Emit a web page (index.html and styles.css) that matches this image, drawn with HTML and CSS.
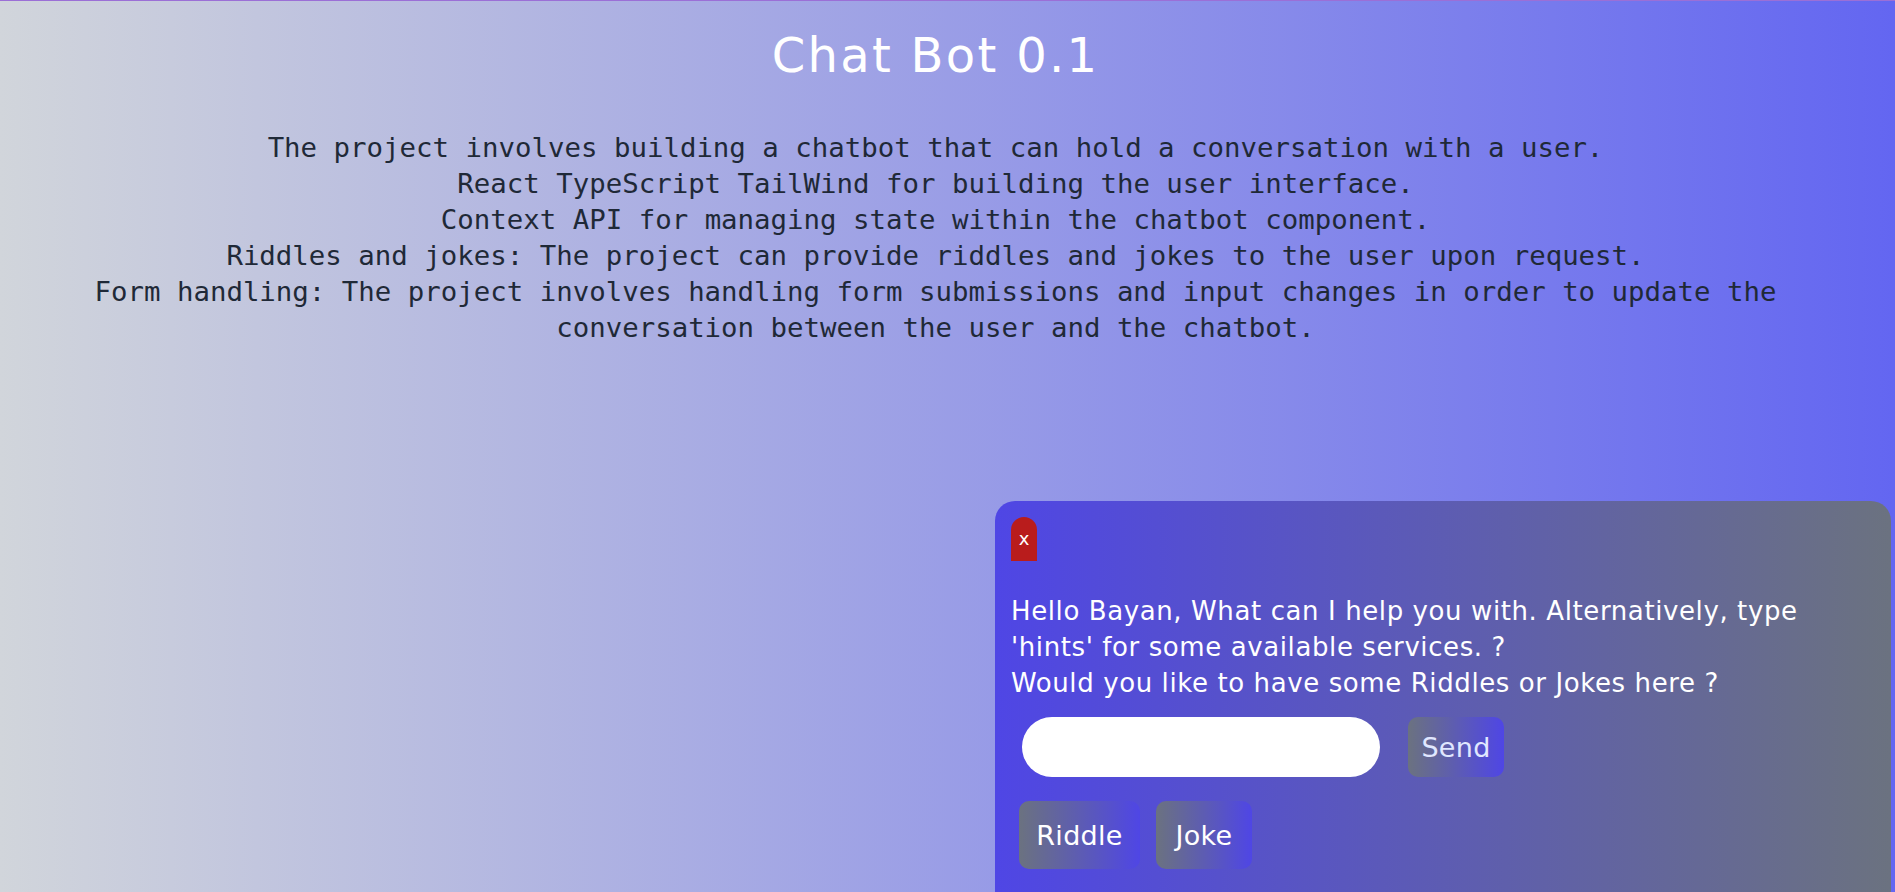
FILE: index.html
```html
<!DOCTYPE html>
<html lang="en">
<head>
<meta charset="utf-8">
<title>Chat Bot 0.1</title>
<link rel="stylesheet" href="styles.css">
</head>
<body>
<main class="page">
  <h1 class="title">Chat Bot 0.1</h1>
  <div class="about">
    <p>The project involves building a chatbot that can hold a conversation with a user.</p>
    <p>React TypeScript TailWind for building the user interface.</p>
    <p>Context API for managing state within the chatbot component.</p>
    <p>Riddles and jokes: The project can provide riddles and jokes to the user upon request.</p>
    <p>Form handling: The project involves handling form submissions and input changes in order to update the conversation between the user and the chatbot.</p>
  </div>
</main>
<section class="chat">
  <button class="close" type="button">x</button>
  <div class="messages">
    <p class="msg msg-first">Hello Bayan, What can I help you with. Alternatively, type 'hints' for some available services. ?</p>
    <p class="msg">Would you like to have some Riddles or Jokes here ?</p>
  </div>
  <form class="form">
    <input class="input" type="text">
    <button class="btn btn-send" type="button">Send</button>
  </form>
  <div class="choices">
    <button class="btn btn-choice btn-riddle" type="button">Riddle</button>
    <button class="btn btn-choice btn-joke" type="button">Joke</button>
  </div>
</section>
</body>
</html>
```
FILE: styles.css
```css
* { box-sizing: border-box; }
html, body { height: 100%; }
body {
  margin: 0;
  border-top: 1px solid #9b6fd6;
  background: linear-gradient(to right, #d1d5db, #6366f1);
  overflow: hidden;
}
.page {
  padding: 30px 24px 0 0;
  text-align: center;
}
.title {
  margin: 0;
  font-family: "DejaVu Sans", sans-serif;
  font-weight: 400;
  font-size: 48px;
  line-height: 48px;
  letter-spacing: 2.3px;
  color: #ffffff;
}
.about {
  margin-top: 51px;
  padding: 0 60px;
  font-family: "DejaVu Sans Mono", monospace;
  font-size: 27.4px;
  line-height: 36px;
  color: #1f2937;
}
.about p { margin: 0; }
.chat {
  position: fixed;
  left: 995px;
  right: 4px;
  top: 501px;
  height: 420px;
  border-radius: 20px;
  background: linear-gradient(to right, #4f46e5, #6b7280);
  padding: 16px 16px;
  font-family: "DejaVu Sans", sans-serif;
  color: #ffffff;
}
.close {
  display: block;
  width: 26px;
  height: 44px;
  border: 0;
  padding: 0;
  border-radius: 13px 13px 0 0;
  background: #b91c1c;
  color: #ffffff;
  font-family: "DejaVu Sans", sans-serif;
  font-size: 18px;
  line-height: 44px;
}
.messages {
  margin-top: 32px;
  font-size: 26px;
  line-height: 36px;
  letter-spacing: 0.6px;
}
.msg { margin: 0; }
.msg-first { max-width: 830px; }
.form {
  display: flex;
  align-items: center;
  gap: 28px;
  margin-top: 16px;
  padding-left: 11px;
}
.input {
  flex: 0 0 358px;
  height: 60px;
  border: 0;
  border-radius: 30px;
  background: #ffffff;
}
.btn {
  border: 0;
  padding: 0;
  font-family: "DejaVu Sans", sans-serif;
  font-size: 27px;
  letter-spacing: 0.3px;
  color: #ffffff;
  background: linear-gradient(to right, #6b7280, #4f46e5);
}
.btn-send {
  width: 96px;
  height: 60px;
  border-radius: 10px;
  color: #e0e7ff;
}
.choices {
  display: flex;
  gap: 16px;
  margin-top: 24px;
  padding-left: 8px;
}
.btn-choice {
  height: 68px;
  border-radius: 10px;
}
.btn-riddle { width: 121px; }
.btn-joke { width: 96px; }
```
